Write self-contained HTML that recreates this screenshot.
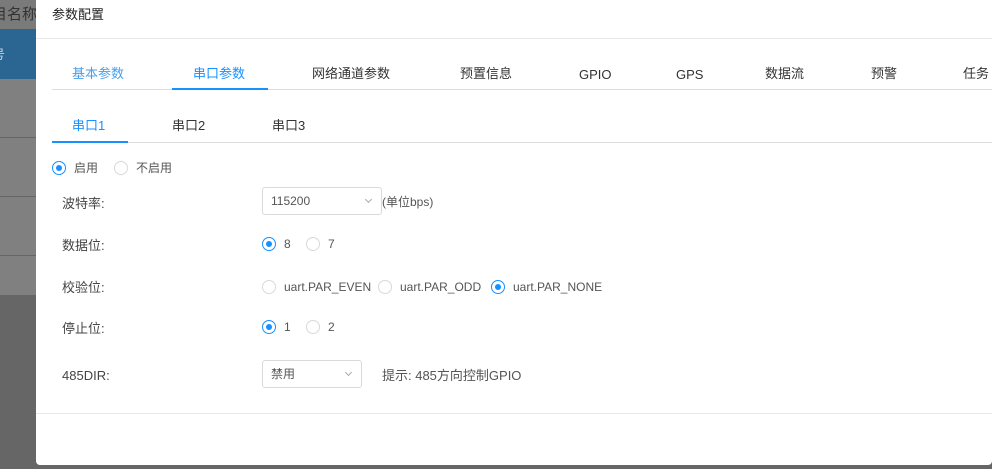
<!DOCTYPE html><html><head><meta charset="utf-8"><style>
*{margin:0;padding:0;box-sizing:border-box}
body{width:992px;height:469px;overflow:hidden;background:#666;font-family:"Liberation Sans","Noto Sans CJK SC",sans-serif;font-size:13px;color:#333;position:relative}
.left{position:absolute;left:0;top:0;width:36px;height:295px;background:#808080}
.abs{position:absolute;white-space:nowrap;line-height:18px}
.modal{position:absolute;left:36px;top:0;width:956px;height:465px;background:#fff;border-radius:0 0 4px 4px}
.r{position:absolute;width:14px;height:14px;border:1px solid #d9d9d9;border-radius:50%}
.r.on{border-color:#1890ff}
.r.on:after{content:"";position:absolute;left:3px;top:3px;width:6px;height:6px;border-radius:50%;background:#1890ff}
.t{position:absolute;white-space:nowrap;font-size:12px;color:#555;line-height:16px}
.sel{position:absolute;border:1px solid #d9d9d9;border-radius:3px;height:28px;line-height:26px;padding-left:8px;font-size:12px;color:#555}
.sel:after{content:"";position:absolute;right:10px;top:9px;width:4px;height:4px;border-right:1px solid #aaa;border-bottom:1px solid #aaa;transform:rotate(45deg)}
</style></head><body>
<div class="left">
<div class="abs" style="left:0;top:0;width:36px;height:29px;background:#7a7a7a"></div>
<div class="abs" style="left:-8px;top:6px;font-size:15px;color:#333">目名称</div>
<div class="abs" style="left:0;top:29px;width:36px;height:50px;background:#2b6591"></div>
<div class="abs" style="left:-8px;top:46px;font-size:13px;color:#ccd">号</div>
<div class="abs" style="left:0;top:137px;width:36px;height:1px;background:#666"></div>
<div class="abs" style="left:0;top:196px;width:36px;height:1px;background:#666"></div>
<div class="abs" style="left:0;top:255px;width:36px;height:1px;background:#666"></div>
</div>
<div class="modal">
<div class="abs" style="left:16px;top:6px;font-size:13px;color:#222">参数配置</div>
<div class="abs" style="left:0;top:38px;width:956px;height:1px;background:#e8e8e8"></div>
<div class="abs" style="left:16px;top:89px;width:940px;height:1px;background:#ddd"></div>
<div class="abs" style="left:136px;top:88px;width:96px;height:2px;background:#1890ff"></div>
<div class="abs" style="top:65px;left:36px;color:#4a9ee8">基本参数</div>
<div class="abs" style="top:65px;left:157px;color:#1890ff">串口参数</div>
<div class="abs" style="top:65px;left:276px">网络通道参数</div>
<div class="abs" style="top:65px;left:424px">预置信息</div>
<div class="abs" style="top:66px;left:543px">GPIO</div>
<div class="abs" style="top:66px;left:640px">GPS</div>
<div class="abs" style="top:65px;left:729px">数据流</div>
<div class="abs" style="top:65px;left:835px">预警</div>
<div class="abs" style="top:65px;left:927px">任务</div>
<div class="abs" style="left:16px;top:142px;width:940px;height:1px;background:#ddd"></div>
<div class="abs" style="left:16px;top:141px;width:76px;height:2px;background:#1890ff"></div>
<div class="abs" style="top:117px;left:36px;color:#1890ff">串口1</div>
<div class="abs" style="top:117px;left:136px">串口2</div>
<div class="abs" style="top:117px;left:236px">串口3</div>
<span class="r on" style="left:16px;top:161px"></span><span class="t" style="left:38px;top:160px">启用</span>
<span class="r" style="left:78px;top:161px"></span><span class="t" style="left:100px;top:160px">不启用</span>
<div class="abs" style="top:195px;left:26px;color:#444">波特率:</div>
<div class="abs" style="top:237px;left:26px;color:#444">数据位:</div>
<div class="abs" style="top:279px;left:26px;color:#444">校验位:</div>
<div class="abs" style="top:320px;left:26px;color:#444">停止位:</div>
<div class="abs" style="top:367px;left:26px;color:#444">485DIR:</div>
<div class="sel" style="left:226px;top:187px;width:120px">115200</div>
<div class="t" style="left:346px;top:194px">(单位bps)</div>
<span class="r on" style="left:226px;top:237px"></span><span class="t" style="left:248px;top:236px">8</span>
<span class="r" style="left:270px;top:237px"></span><span class="t" style="left:292px;top:236px">7</span>
<span class="r" style="left:226px;top:280px"></span><span class="t" style="left:248px;top:279px">uart.PAR_EVEN</span>
<span class="r" style="left:342px;top:280px"></span><span class="t" style="left:364px;top:279px">uart.PAR_ODD</span>
<span class="r on" style="left:455px;top:280px"></span><span class="t" style="left:477px;top:279px">uart.PAR_NONE</span>
<span class="r on" style="left:226px;top:320px"></span><span class="t" style="left:248px;top:319px">1</span>
<span class="r" style="left:270px;top:320px"></span><span class="t" style="left:292px;top:319px">2</span>
<div class="sel" style="left:226px;top:360px;width:100px">禁用</div>
<div class="abs" style="left:346px;top:367px;font-size:13px;color:#555">提示: 485方向控制GPIO</div>
<div class="abs" style="left:0;top:413px;width:956px;height:1px;background:#e8e8e8"></div>
</div>
</body></html>
